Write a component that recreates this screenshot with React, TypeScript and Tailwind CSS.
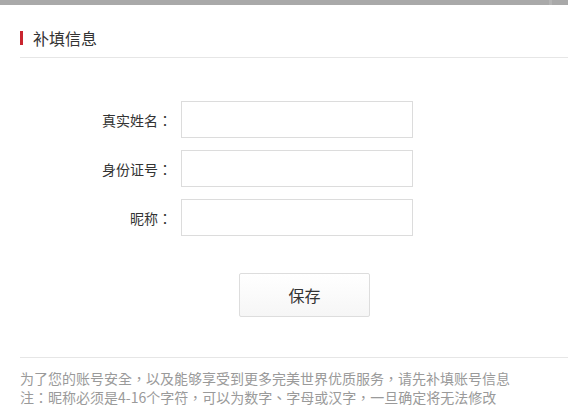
const fields = ["真实姓名", "身份证号", "昵称"];

const App = () => {
  return (
    <div className="w-[568px] h-[406px] overflow-hidden bg-white font-['Noto_Sans_CJK_SC',sans-serif] text-[#333]">
      <div className="h-[5px] bg-[#a9a9a9] flex justify-end">
        <div className="w-[3px] h-full bg-[#b4b4b4] mr-[16px]" />
      </div>
      <div className="pl-[20px]">
        <div className="h-[53px] pt-[13px] flex items-center border-b border-[#e6e6e6]">
          <span className="w-[3px] h-[14px] bg-[#c9252f]" />
          <h2 className="ml-[10px] text-[16px] leading-[20px]">补填信息</h2>
        </div>

        <form className="mt-[43px] flex flex-col gap-[12px]">
          {fields.map((label) => (
            <div key={label} className="flex items-center">
              <label className="w-[152px] text-right text-[14px] leading-[20px] text-[#333]">
                {label}
                <span className="font-['Noto_Sans_CJK_TC',sans-serif]">：</span>
              </label>
              <input type="text" className="ml-[9px] w-[232px] h-[37px] border border-[#dcdcdc] bg-white outline-none px-2" />
            </div>
          ))}
        </form>

        <button
          type="button"
          className="mt-[37px] ml-[219px] w-[131px] h-[44px] border border-[#dddddd] rounded-[2px] bg-gradient-to-b from-white to-[#f6f6f6] text-[16px] text-[#333]"
        >
          保存
        </button>

        <div className="mt-[40px] border-t border-[#e6e6e6] pt-[11px] text-[14px] leading-[19px] text-[#9a9a9a] whitespace-nowrap font-['Noto_Sans_CJK_TC',sans-serif]">
          <p>为了您的账号安全，以及能够享受到更多完美世界优质服务，请先补填账号信息</p>
          <p>注：昵称必须是4-16个字符，可以为数字、字母或汉字，一旦确定将无法修改</p>
        </div>
      </div>
    </div>
  );
};

export default App;
